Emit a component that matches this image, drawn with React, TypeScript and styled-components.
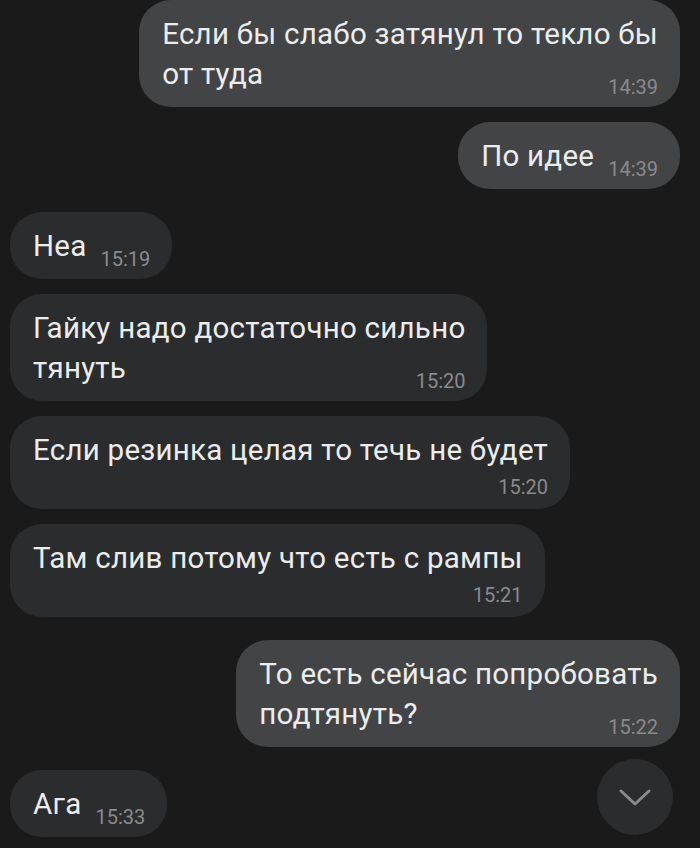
import React from "react";
import styled, { createGlobalStyle } from "styled-components";

const Global = createGlobalStyle`
  html, body {
    margin: 0;
    padding: 0;
    background: #1a1a1a;
  }
  body {
    font-family: Roboto, "Noto Sans", "Liberation Sans", sans-serif;
    -webkit-font-smoothing: antialiased;
  }
`;

type Msg = {
  out: boolean;
  lines: string[];
  time: string;
  timeBelow?: boolean;
};

const messages: Msg[] = [
  { out: true, lines: ["Если бы слабо затянул то текло бы", "от туда"], time: "14:39" },
  { out: true, lines: ["По идее"], time: "14:39" },
  { out: false, lines: ["Неа"], time: "15:19" },
  { out: false, lines: ["Гайку надо достаточно сильно", "тянуть"], time: "15:20" },
  { out: false, lines: ["Если резинка целая то течь не будет"], time: "15:20", timeBelow: true },
  { out: false, lines: ["Там слив потому что есть с рампы"], time: "15:21", timeBelow: true },
  { out: true, lines: ["То есть сейчас попробовать", "подтянуть?"], time: "15:22" },
  { out: false, lines: ["Ага"], time: "15:33" },
];

const Screen = styled.div`
  position: relative;
  width: 700px;
  height: 848px;
  overflow: hidden;
  background: #1a1a1a;
`;

const List = styled.div`
  display: flex;
  flex-direction: column;
  padding: 0 20px 0 10px;
`;

const Row = styled.div<{ $out: boolean; $gap: number }>`
  display: flex;
  justify-content: ${(p) => (p.$out ? "flex-end" : "flex-start")};
  margin-top: ${(p) => p.$gap}px;
`;

const Bubble = styled.div<{ $out: boolean }>`
  display: flex;
  flex-direction: column;
  padding: 14px 22px 13px 23px;
  border-radius: 32px;
  background: ${(p) => (p.$out ? "#434446" : "#2b2c2e")};
  color: #ececec;
`;

const Line = styled.div`
  font-size: 29.5px;
  letter-spacing: 0.25px;
  line-height: 40px;
  white-space: nowrap;
`;

const LastRow = styled.div`
  display: flex;
  align-items: flex-end;
`;

const Time = styled.span`
  margin-left: auto;
  margin-bottom: -1px;
  padding-left: 14px;
  font-size: 20px;
  line-height: 16px;
  color: #8a8a8c;
  white-space: nowrap;
`;

const TimeRow = styled.div`
  text-align: right;
  font-size: 20px;
  line-height: 20px;
  margin-top: 7px;
  margin-bottom: -1px;
  color: #8a8a8c;
`;

const ScrollButton = styled.div`
  position: absolute;
  left: 597px;
  top: 759px;
  width: 76px;
  height: 76px;
  border-radius: 50%;
  background: #2b2c2e;
  display: flex;
  align-items: center;
  justify-content: center;
`;

function Message({ m }: { m: Msg }) {
  const head = m.lines.slice(0, -1);
  const last = m.lines[m.lines.length - 1];
  return (
    <Bubble $out={m.out}>
      {head.map((l, i) => (
        <Line key={i}>{l}</Line>
      ))}
      {m.timeBelow ? (
        <>
          <Line>{last}</Line>
          <TimeRow>{m.time}</TimeRow>
        </>
      ) : (
        <LastRow>
          <Line>{last}</Line>
          <Time>{m.time}</Time>
        </LastRow>
      )}
    </Bubble>
  );
}

export default function App() {
  return (
    <Screen>
      <Global />
      <List>
        {messages.map((m, i) => {
          const prev = messages[i - 1];
          const gap = i === 0 ? 0 : prev.out === m.out ? 15 : 23;
          return (
            <Row key={i} $out={m.out} $gap={gap}>
              <Message m={m} />
            </Row>
          );
        })}
      </List>
      <ScrollButton>
        <svg width="34" height="20" viewBox="0 0 34 20" fill="none">
          <path
            d="M3 4 L17 17 L31 4"
            stroke="#8a8a8c"
            strokeWidth="3"
            strokeLinecap="round"
            strokeLinejoin="round"
          />
        </svg>
      </ScrollButton>
    </Screen>
  );
}
